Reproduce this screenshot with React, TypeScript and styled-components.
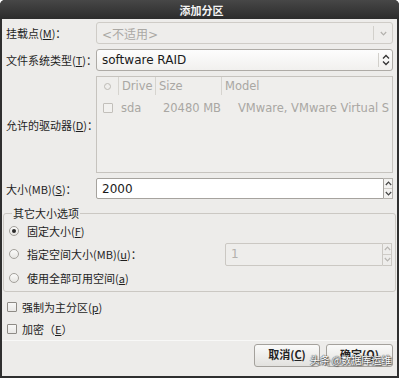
import React from "react";
import styled, { createGlobalStyle } from "styled-components";

const Global = createGlobalStyle`
  html, body { margin: 0; padding: 0; background: #ffffff; }
  body {
    font-family: "DejaVu Sans", "Noto Sans CJK SC", sans-serif;
    font-size: 11px;
    color: #1e1e1e;
  }
  * { box-sizing: border-box; }
`;

const Window = styled.div`
  position: relative;
  width: 399px;
  height: 378px;
  background: #2f2f2f;
  border-radius: 5px 5px 0 0;
  padding: 0 2px 2px 2px;
  display: flex;
  flex-direction: column;
  overflow: hidden;
`;

const TitleBar = styled.div`
  height: 19px;
  flex: none;
  display: flex;
  align-items: center;
  justify-content: center;
  background: linear-gradient(#474747, #2c2c2c);
  margin: 0 -2px;
  color: #f4f4f4;
  font-weight: bold;
  font-size: 11px;
  font-family: "Noto Sans CJK SC", sans-serif;
  padding-left: 4px;
`;

const Body = styled.div`
  flex: 1;
  background: #edecea;
  display: flex;
  flex-direction: column;
  font-family: "DejaVu Sans", "Noto Sans CJK SC", sans-serif;
`;

const Form = styled.div`
  display: grid;
  grid-template-columns: 90px 1fr;
  grid-template-rows: 22px 22px 97px 21px;
  row-gap: 5px;
  align-items: center;
  padding: 3px 4px 0 4px;
`;

const Label = styled.span`
  font-family: "Noto Sans CJK SC", sans-serif;
  font-size: 11px;
  color: #1e1e1e;
  white-space: nowrap;
  u { text-decoration: underline; text-underline-offset: 1px; }
`;

const Combo = styled.div<{ $disabled?: boolean }>`
  height: 100%;
  display: flex;
  align-items: stretch;
  border: 1px solid ${(p) => (p.$disabled ? "#cfccc7" : "#aeaba6")};
  border-radius: 3px;
  background: ${(p) =>
    p.$disabled ? "#eeedeb" : "linear-gradient(#fdfdfd, #f1f0ee)"};
  color: ${(p) => (p.$disabled ? "#aaa8a4" : "#1a1a1a")};
`;

const ComboText = styled.span`
  flex: 1;
  display: flex;
  align-items: center;
  padding-left: 5px;
  font-size: 12px;
  font-family: "DejaVu Sans", "Noto Sans CJK SC", sans-serif;
`;

const ComboArrow = styled.span<{ $w: number }>`
  width: ${(p) => p.$w}px;
  display: flex;
  align-items: center;
  justify-content: center;
  border-left: 1px solid #d2d0cb;
  margin: 3px 0;
`;

const Table = styled.div`
  height: 100%;
  border: 1px solid #c6c3be;
  background: #efeeec;
  color: #a9a7a3;
  display: flex;
  flex-direction: column;
`;

const TRow = styled.div<{ $head?: boolean }>`
  display: grid;
  grid-template-columns: 21px 37px 66px 1fr;
  height: ${(p) => (p.$head ? 18 : 20)}px;
  align-items: center;
  margin-top: ${(p) => (p.$head ? 0 : 3)}px;
`;

const TCell = styled.span<{ $sep?: boolean; $right?: boolean; $pl?: number }>`
  height: 100%;
  display: flex;
  align-items: center;
  justify-content: ${(p) => (p.$right ? "flex-end" : "flex-start")};
  padding-left: ${(p) => p.$pl ?? 3}px;
  border-left: ${(p) => (p.$sep ? "1px solid #d6d4cf" : "none")};
  white-space: nowrap;
  overflow: hidden;
  font-size: 11.5px;
`;

const HeadCircle = styled.span`
  width: 7px;
  height: 7px;
  border-radius: 50%;
  border: 1px solid #bdbab5;
  margin-left: 3px;
`;

const Box = styled.span<{ $muted?: boolean }>`
  width: 10px;
  height: 10px;
  flex: none;
  border: 1px solid ${(p) => (p.$muted ? "#c2bfba" : "#8e8b86")};
  border-radius: 1px;
  background: ${(p) => (p.$muted ? "#f2f1ef" : "linear-gradient(#f8f8f7, #e9e8e6)")};
`;

const SpinRow = styled.div`
  height: 100%;
  display: flex;
  align-items: stretch;
`;

const Entry = styled.div<{ $disabled?: boolean }>`
  flex: 1;
  display: flex;
  align-items: center;
  padding-left: 5px;
  background: ${(p) => (p.$disabled ? "#eeedeb" : "#ffffff")};
  border: 1px solid ${(p) => (p.$disabled ? "#cbc8c3" : "#a6a39e")};
  border-radius: 2px 0 0 2px;
  color: ${(p) => (p.$disabled ? "#b3b1ad" : "#1a1a1a")};
  font-size: 12px;
`;

const Arrows = styled.div<{ $disabled?: boolean }>`
  width: 9px;
  display: flex;
  flex-direction: column;
  border: 1px solid ${(p) => (p.$disabled ? "#cbc8c3" : "#b5b2ad")};
  border-left: none;
  background: ${(p) => (p.$disabled ? "#eeedeb" : "#f3f2f0")};
`;

const ArrowHalf = styled.span`
  flex: 1;
  display: flex;
  align-items: center;
  justify-content: center;
  & + & { border-top: 1px solid #cfccc7; }
`;

const Frame = styled.fieldset`
  margin: 7px 1px 0 1px;
  padding: 0 3px 1px 5px;
  border: 1px solid #cbc8c3;
  border-radius: 3px;
  min-width: 0;
`;

const Legend = styled.legend`
  padding: 0 1px;
  margin-left: 3px;
  line-height: 14px;
  font-family: "Noto Sans CJK SC", sans-serif;
  font-size: 11px;
  color: #1e1e1e;
`;

const OptionRow = styled.div<{ $h: number }>`
  height: ${(p) => p.$h}px;
  display: flex;
  align-items: center;
  gap: 8px;
`;

const Radio = styled.span<{ $on?: boolean }>`
  width: 10px;
  height: 10px;
  flex: none;
  border-radius: 50%;
  border: 1px solid #a3a09b;
  background: linear-gradient(#fbfbfa, #e6e5e2);
  display: flex;
  align-items: center;
  justify-content: center;
  &::after {
    content: "";
    width: 4px;
    height: 4px;
    border-radius: 50%;
    background: ${(p) => (p.$on ? "#2a2a2a" : "transparent")};
  }
`;

const OptionSpin = styled.div`
  margin-left: auto;
  width: 167px;
  height: 23px;
  display: flex;
  align-items: stretch;
`;

const Checks = styled.div`
  margin-top: 4px;
  padding-left: 5px;
  display: flex;
  flex-direction: column;
`;

const CheckRow = styled.div`
  height: 22px;
  display: flex;
  align-items: center;
  gap: 5px;
`;

const Separator = styled.div`
  height: 1px;
  background: #d3d1cc;
  border-bottom: 1px solid #f8f8f7;
`;

const Footer = styled.div`
  position: relative;
  display: flex;
  justify-content: flex-end;
  gap: 6px;
  padding: 3px 4px 0 4px;
`;

const Button = styled.button<{ $w: number }>`
  width: ${(p) => p.$w}px;
  height: 23px;
  border: 1px solid #a4a19c;
  border-radius: 3px;
  background: linear-gradient(#fafaf9, #e2e1de);
  font-family: "Noto Sans CJK SC", sans-serif;
  font-size: 11px;
  font-weight: bold;
  color: #222;
  padding: 0 0 3px 0;
  u { text-decoration: underline; }
`;

const Watermark = styled.span`
  position: absolute;
  right: 6px;
  top: 13px;
  font-family: "Noto Sans CJK SC", sans-serif;
  font-size: 10.5px;
  line-height: 12px;
  color: #ffffff;
  letter-spacing: -0.5px;
  text-shadow: 0 0 1px #333, 0 0 1px #333, 1px 1px 1px #555;
  pointer-events: none;
`;

const Chevron = ({ dir, color }: { dir: "up" | "down"; color: string }) => (
  <svg width="7" height="5" viewBox="0 0 7 5">
    <path
      d={dir === "down" ? "M0.8 1 L3.5 3.8 L6.2 1" : "M0.8 4 L3.5 1.2 L6.2 4"}
      fill="none"
      stroke={color}
      strokeWidth="1.2"
    />
  </svg>
);

const UpDown = () => (
  <svg width="8" height="12" viewBox="0 0 8 12">
    <path d="M1 4.5 L4 1.5 L7 4.5 M1 7.5 L4 10.5 L7 7.5" fill="none" stroke="#333" strokeWidth="1.3" />
  </svg>
);

export default function App() {
  return (
    <>
      <Global />
      <Window>
        <TitleBar>添加分区</TitleBar>
        <Body>
          <Form>
            <Label>
              挂载点(<u>M</u>)：
            </Label>
            <Combo $disabled>
              <ComboText>&lt;不适用&gt;</ComboText>
              <ComboArrow $w={19}>
                <Chevron dir="down" color="#b3b1ad" />
              </ComboArrow>
            </Combo>

            <Label>
              文件系统类型(<u>T</u>)：
            </Label>
            <Combo>
              <ComboText>software RAID</ComboText>
              <ComboArrow $w={14}>
                <UpDown />
              </ComboArrow>
            </Combo>

            <Label>
              允许的驱动器(<u>D</u>)：
            </Label>
            <Table>
              <TRow $head>
                <TCell $pl={4}>
                  <HeadCircle />
                </TCell>
                <TCell $sep>Drive</TCell>
                <TCell $sep>Size</TCell>
                <TCell $sep>Model</TCell>
              </TRow>
              <TRow>
                <TCell $pl={6}>
                  <Box $muted />
                </TCell>
                <TCell>sda</TCell>
                <TCell $right>20480 MB</TCell>
                <TCell $pl={17}>VMware, VMware Virtual S</TCell>
              </TRow>
            </Table>

            <Label>
              大小(MB)(<u>S</u>)：
            </Label>
            <SpinRow>
              <Entry>2000</Entry>
              <Arrows>
                <ArrowHalf>
                  <Chevron dir="up" color="#444" />
                </ArrowHalf>
                <ArrowHalf>
                  <Chevron dir="down" color="#444" />
                </ArrowHalf>
              </Arrows>
            </SpinRow>
          </Form>

          <Frame>
            <Legend>其它大小选项</Legend>
            <OptionRow $h={22}>
              <Radio $on />
              <Label>
                固定大小(<u>F</u>)
              </Label>
            </OptionRow>
            <OptionRow $h={24}>
              <Radio />
              <Label>
                指定空间大小(MB)(<u>u</u>)：
              </Label>
              <OptionSpin>
                <Entry $disabled>1</Entry>
                <Arrows $disabled>
                  <ArrowHalf>
                    <Chevron dir="up" color="#b8b6b2" />
                  </ArrowHalf>
                  <ArrowHalf>
                    <Chevron dir="down" color="#b8b6b2" />
                  </ArrowHalf>
                </Arrows>
              </OptionSpin>
            </OptionRow>
            <OptionRow $h={24}>
              <Radio />
              <Label>
                使用全部可用空间(<u>a</u>)
              </Label>
            </OptionRow>
          </Frame>

          <Checks>
            <CheckRow>
              <Box />
              <Label>
                强制为主分区(<u>p</u>)
              </Label>
            </CheckRow>
            <CheckRow>
              <Box />
              <Label>
                加密（<u>E</u>）
              </Label>
            </CheckRow>
          </Checks>

          <Separator />

          <Footer>
            <Button $w={66}>
              取消(<u>C</u>)
            </Button>
            <Button $w={67}>
              确定(<u>O</u>)
            </Button>
            <Watermark>头条 @数据库运维</Watermark>
          </Footer>
        </Body>
      </Window>
    </>
  );
}
